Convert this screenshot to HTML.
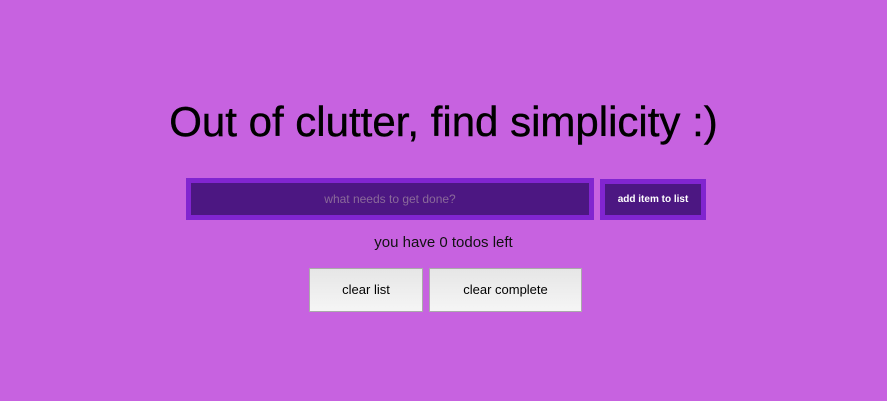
<!DOCTYPE html>
<html><head><style>
body{margin:0;width:887px;height:401px;background:#c762e0;font-family:"Liberation Sans",sans-serif;position:relative;overflow:hidden}
h1{position:absolute;left:0;width:887px;top:97px;margin:0;text-align:center;font-size:42px;font-weight:normal;color:#000;line-height:50px;-webkit-text-stroke:0.4px #000}
.inp{position:absolute;left:186px;top:178px;width:398px;height:32px;border:5px solid #8125d0;background:#4c1782;color:#8a6a9a;font-size:12px;text-align:center;line-height:32px}
.btn{position:absolute;left:600px;top:179px;width:96px;height:31px;border:5px solid #8125d0;background:#4c1782;color:#fff;font-size:10px;font-weight:bold;text-align:center;line-height:31px}
.cnt{position:absolute;left:0;width:887px;top:234px;text-align:center;font-size:15px;color:#111}
.b2{position:absolute;top:268px;height:42px;border:1px solid #aaa;background:linear-gradient(#e6e6e6,#f5f5f5);font-size:13px;text-align:center;line-height:42px;color:#000}
</style></head><body>
<h1>Out of clutter, find simplicity :)</h1>
<div class="inp">what needs to get done?</div>
<div class="btn">add item to list</div>
<div class="cnt">you have 0 todos left</div>
<div class="b2" style="left:309px;width:112px">clear list</div>
<div class="b2" style="left:429px;width:151px">clear complete</div>
</body></html>
